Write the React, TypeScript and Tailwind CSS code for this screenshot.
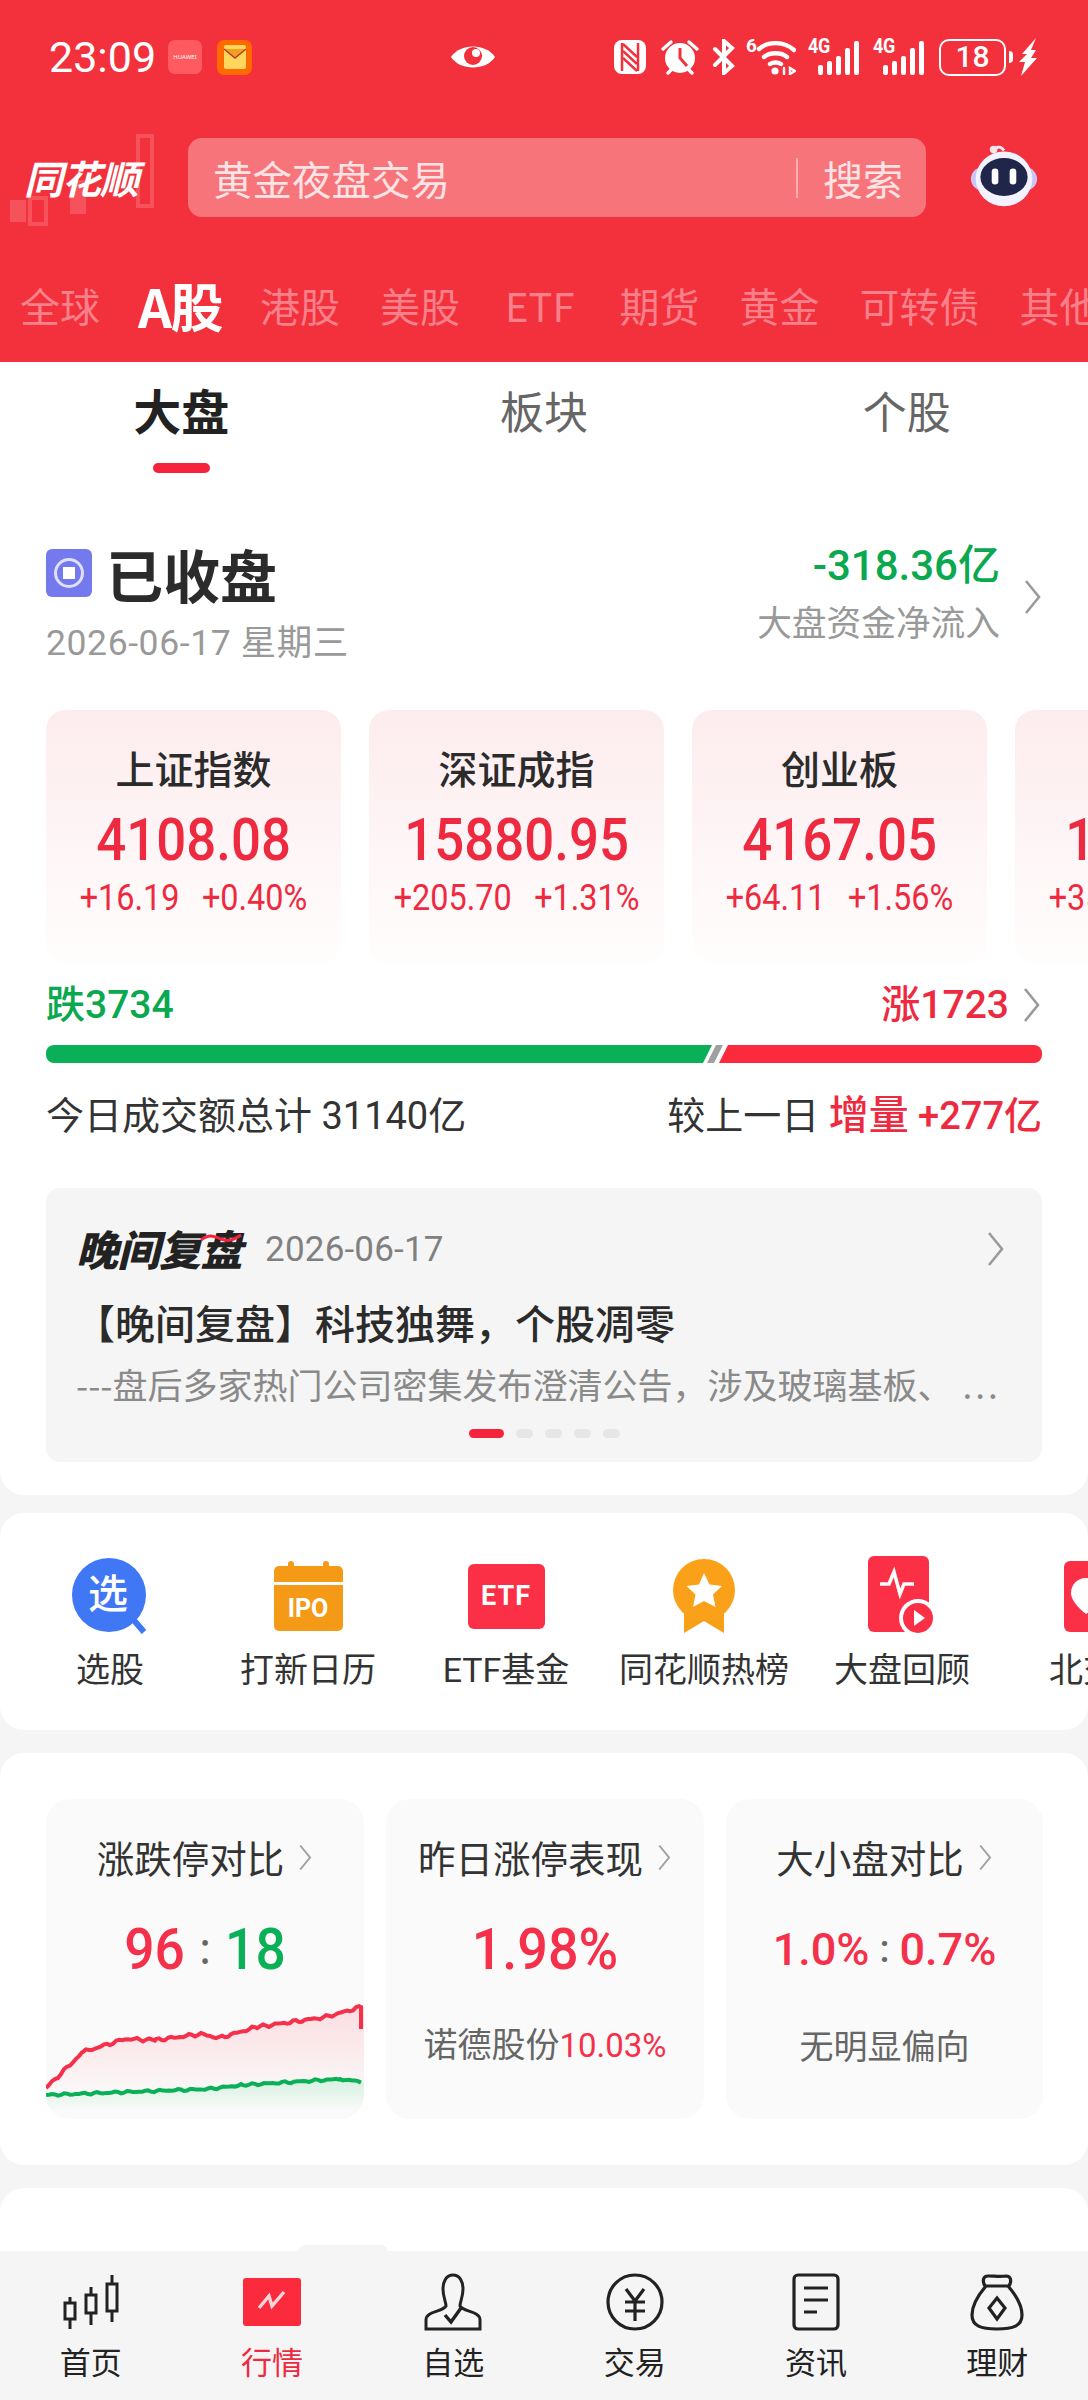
import React from 'react';

const CJK = '"Noto Sans CJK SC", sans-serif';
const NUM = 'Roboto, "Noto Sans CJK SC", sans-serif';

function Chevron({ className = 'w-[20px] h-[36px]', color = '#9a9a9a' }: { className?: string; color?: string }) {
  return (
    <svg viewBox="0 0 20 36" className={className} fill="none" stroke={color} strokeWidth="2.6">
      <path d="M3 2l13 16L3 34" />
    </svg>
  );
}

function StatusIcons() {
  return (
    <div className="flex items-center text-white">
      <svg viewBox="0 0 32 34" className="w-[32px] h-[34px] mr-[15px]" fill="white">
        <rect width="32" height="34" rx="8" />
        <path d="M8 3v28M24 3v28" stroke="#f2313c" strokeWidth="2.5" fill="none" />
        <path d="M9 4l14 13M9 11l14 13M9 18l14 13" stroke="#f2313c" strokeWidth="2.4" fill="none" />
      </svg>
      <svg viewBox="0 0 38 36" className="w-[38px] h-[36px] mr-[13px]" fill="white">
        <circle cx="19" cy="19" r="15" />
        <path d="M19 9v10l7 8" stroke="#f2313c" strokeWidth="3" fill="none" />
        <path d="M2 10l8-7M36 10l-8-7M7 34l4-4M31 34l-4-4" stroke="white" strokeWidth="3.4" fill="none" strokeLinecap="round" />
      </svg>
      <svg viewBox="0 0 24 36" className="w-[24px] h-[36px] mr-[10px]" fill="none" stroke="white" strokeWidth="4" strokeLinecap="round">
        <path d="M3 10l17 17-8 7V2l8 7L3 26" />
      </svg>
      <div className="relative w-[50px] h-[36px] mr-[12px]">
        <span className="absolute left-0 -top-[3px] text-[19px] font-bold leading-[20px]" style={{ fontFamily: NUM }}>6</span>
        <svg viewBox="0 0 50 36" className="w-[50px] h-[36px]" fill="none" stroke="white" strokeWidth="4.4" strokeLinecap="round">
          <path d="M13 10c9-8 25-8 35 1M18 18c6-5 17-5 23 0M24 25c3-2 8-2 11 0" />
          <circle cx="29" cy="32" r="3.6" fill="white" stroke="none" />
          <path d="M38 29v6M44 29l5 3-5 3z" strokeWidth="2.4" />
        </svg>
      </div>
      <Signal />
      <div className="w-[14px]" />
      <Signal />
      <div className="w-[15px]" />
      <div className="w-[67px] h-[37px] rounded-[10px] border-[2.5px] border-white flex items-center justify-center text-[30px] font-medium leading-none" style={{ fontFamily: NUM }}>
        18
      </div>
      <div className="w-[4px] h-[12px] bg-white rounded-r-full ml-[3px] mr-[6px]" />
      <svg viewBox="0 0 18 38" className="w-[18px] h-[38px]" fill="white">
        <path d="M17 0L3 16h5L0 24h6L2 38 18 20h-6l5-8h-5z" />
      </svg>
    </div>
  );
}

function Signal() {
  return (
    <div className="relative w-[51px] h-[36px]">
      <span className="absolute left-0 -top-[3px] text-[20px] font-bold leading-[20px] tracking-[-0.5px] scale-x-[0.9] origin-left" style={{ fontFamily: NUM }}>4G</span>
      <div className="absolute inset-0 flex items-end justify-end gap-[4px]">
        <div className="w-[5px] h-[10px] bg-white rounded-[2px]" />
        <div className="w-[5px] h-[14px] bg-white rounded-[2px]" />
        <div className="w-[5px] h-[19px] bg-white rounded-[2px]" />
        <div className="w-[5px] h-[27px] bg-white rounded-[2px]" />
        <div className="w-[5px] h-[34px] bg-white rounded-[2px]" />
      </div>
    </div>
  );
}

function StatusBar() {
  return (
    <div className="h-[114px] pl-[49px] pr-[51px] flex items-center">
      <span className="text-[43px] text-white leading-none w-[119px]" style={{ fontFamily: NUM }}>23:09</span>
      <div className="w-[34px] h-[34px] rounded-[7px] bg-[#ff5a60] flex items-center justify-center text-[6px] text-white">HUAWEI</div>
      <div className="w-[35px] h-[35px] rounded-[7px] bg-[#ff6a00] ml-[15px] flex items-center justify-center">
        <svg viewBox="0 0 24 26" className="w-[24px] h-[26px]">
          <rect x="1" y="1" width="22" height="24" rx="2" fill="#ffd65c" />
          <path d="M1 5l11 9 11-9" fill="#f0a020" stroke="#c0392b" strokeWidth="1.5" />
        </svg>
      </div>
      <div className="ml-[198px] mr-[118px]">
        <svg viewBox="0 0 46 34" className="w-[46px] h-[34px]">
          <path d="M1 17C10 3 36 3 45 17 36 31 10 31 1 17z" fill="white" />
          <circle cx="23" cy="16" r="9" fill="#f2313c" />
          <circle cx="26" cy="13" r="4" fill="white" />
        </svg>
      </div>
      <StatusIcons />
    </div>
  );
}

function Logo() {
  return (
    <div className="relative w-[188px] h-[100px] shrink-0">
      <svg viewBox="0 0 160 100" className="absolute left-[8px] -top-[8px] w-[160px] h-[100px]" fill="#f6525c">
        <rect x="2" y="70" width="16" height="22" />
        <rect x="22" y="68" width="16" height="26" fill="none" stroke="#f6525c" strokeWidth="4" />
        <rect x="62" y="50" width="16" height="34" />
        <rect x="130" y="6" width="14" height="70" fill="none" stroke="#f6525c" strokeWidth="4" />
      </svg>
      <span className="absolute left-[24px] top-[14px] text-[39px] leading-[50px] font-bold italic text-white tracking-[-1px]" style={{ fontFamily: CJK }}>同花顺</span>
    </div>
  );
}

function Robot() {
  return (
    <svg viewBox="0 0 72 72" className="w-[72px] h-[68px]">
      <path d="M24 10c2-6 8-8 12-2" stroke="#e7e8ff" strokeWidth="3" fill="none" />
      <circle cx="25" cy="7" r="4" fill="#f3e5e8" />
      <rect x="1" y="26" width="70" height="24" rx="12" fill="#c9c6f6" />
      <ellipse cx="36" cy="38" rx="30" ry="29" fill="#f3f2ff" />
      <ellipse cx="36" cy="36" rx="25" ry="20" fill="#20264a" />
      <rect x="23" y="27" width="7" height="17" rx="3.5" fill="white" />
      <rect x="42" y="27" width="7" height="17" rx="3.5" fill="white" />
    </svg>
  );
}

function Header() {
  const tabs = ['全球', 'A股', '港股', '美股', 'ETF', '期货', '黄金', '可转债', '其他'];
  return (
    <div className="bg-[#f2313c] h-[362px] shrink-0 overflow-hidden">
      <StatusBar />
      <div className="flex items-start h-[128px] pt-[24px]">
        <Logo />
        <div className="w-[738px] h-[79px] rounded-[14px] bg-[#f7747b] flex items-center pl-[25px] text-[#fde3e4]">
          <span className="text-[39.5px] leading-none flex-1" style={{ fontFamily: CJK }}>黄金夜盘交易</span>
          <div className="w-[2px] h-[40px] bg-[#fbaeb2]" />
          <span className="text-[40px] leading-none ml-[25px] mr-[23px]" style={{ fontFamily: CJK }}>搜索</span>
        </div>
        <div className="ml-[42px] mt-[5px]"><Robot /></div>
      </div>
      <div className="flex items-center gap-[40px] pl-[20px] h-[120px] pt-[6px] whitespace-nowrap" style={{ fontFamily: CJK }}>
        {tabs.map((t) =>
          t === 'A股' ? (
            <span key={t} className="text-[53px] font-bold text-white leading-none -ml-[2px] -mr-[2px] tracking-[-1.5px]">{t}</span>
          ) : t === 'ETF' ? (
            <span key={t} className="text-[40px] text-[#f8808a] leading-none px-[5px]">{t}</span>
          ) : (
            <span key={t} className="text-[40px] text-[#f8808a] leading-none">{t}</span>
          )
        )}
      </div>
    </div>
  );
}

function SubTabs() {
  return (
    <div className="grid grid-cols-3 h-[110px]" style={{ fontFamily: CJK }}>
      <div className="flex flex-col items-center pt-[21px]">
        <span className="text-[48px] leading-[52px] font-bold text-[#222]">大盘</span>
        <div className="w-[57px] h-[10px] mt-[28px] rounded-full bg-[#f5243c]" />
      </div>
      <div className="flex justify-center pt-[22px] text-[44px] leading-[52px] text-[#666]">板块</div>
      <div className="flex justify-center pt-[22px] text-[44px] leading-[52px] text-[#666]">个股</div>
    </div>
  );
}

function MarketState() {
  return (
    <div className="flex justify-between pl-[46px] pr-[46px] pt-[71px] h-[238px]">
      <div>
        <div className="flex items-center h-[60px]">
          <div className="w-[46px] h-[48px] rounded-[6px] bg-[#7479ee] flex items-center justify-center">
            <div className="w-[30px] h-[30px] rounded-full border-[3px] border-[#dfe0ff] flex items-center justify-center">
              <div className="w-[12px] h-[12px] bg-white" />
            </div>
          </div>
          <span className="ml-[14px] text-[57px] leading-none font-bold text-[#2b2b2b]" style={{ fontFamily: CJK }}>已收盘</span>
        </div>
        <div className="mt-[20px] text-[35.5px] leading-[40px] text-[#999] tracking-[0.6px]" style={{ fontFamily: NUM }}>2026-06-17 星期三</div>
      </div>
      <div className="flex items-center h-[100px] -mt-[6px]">
        <div className="flex flex-col items-end mt-[10px]">
          <span className="text-[42px] leading-[50px] font-medium text-[#0aa84f]" style={{ fontFamily: NUM }}>-318.36亿</span>
          <span className="text-[34.7px] leading-[44px] mt-[8px] text-[#999]" style={{ fontFamily: CJK }}>大盘资金净流入</span>
        </div>
        <Chevron className="w-[20px] h-[36px] ml-[23px] -mr-[1px] mt-[20px]" />
      </div>
    </div>
  );
}

const indexes = [
  { name: '上证指数', value: '4108.08', a: '+16.19', b: '+0.40%' },
  { name: '深证成指', value: '15880.95', a: '+205.70', b: '+1.31%' },
  { name: '创业板', value: '4167.05', a: '+64.11', b: '+1.56%' },
  { name: '科创50', value: '1620.33', a: '+35.20', b: '+2.20%' },
];

function IndexCards() {
  return (
    <div className="flex gap-[28px] pl-[46px] overflow-hidden">
      {indexes.map((c) => (
        <div key={c.name} className="w-[295px] h-[254px] shrink-0 rounded-[20px] bg-gradient-to-b from-[#fdecee] to-[#fffdfd] flex flex-col items-center pt-[33px]">
          <span className="text-[39px] leading-[48px] font-medium text-[#2b2b2b]" style={{ fontFamily: CJK }}>{c.name}</span>
          <span className="text-[60px] leading-[60px] mt-[19px] font-medium text-[#ee2a40] scale-x-[0.88]" style={{ fontFamily: NUM }}>{c.value}</span>
          <div className="flex gap-[25px] mt-[8px] text-[36px] leading-[40px] text-[#ee2a40] scale-x-[0.9] whitespace-nowrap" style={{ fontFamily: NUM }}>
            <span>{c.a}</span>
            <span>{c.b}</span>
          </div>
        </div>
      ))}
    </div>
  );
}

function Breadth() {
  return (
    <div className="px-[46px] pt-[16px]">
      <div className="flex justify-between items-center h-[50px]">
        <span className="text-[39px] leading-none font-medium text-[#0aa84f]" style={{ fontFamily: NUM }}>跌3734</span>
        <div className="flex items-center">
          <span className="text-[39px] leading-none font-medium text-[#ee2a40]" style={{ fontFamily: NUM }}>涨1723</span>
          <Chevron className="w-[20px] h-[36px] ml-[13px]" />
        </div>
      </div>
      <svg viewBox="0 0 996 18" className="w-[996px] h-[18px] mt-[15px] block">
        <path d="M8 0h658l-9 18H8a8 8 0 0 1-8-8V8a8 8 0 0 1 8-8z" fill="#0ab057" />
        <path d="M670 0h7l-9 18h-7z" fill="#a0a0a0" />
        <path d="M682 0h306a8 8 0 0 1 8 8v2a8 8 0 0 1-8 8H673z" fill="#fb2a3c" />
      </svg>
      <div className="flex justify-between items-center h-[50px] mt-[28px] text-[38px] leading-none text-[#333]" style={{ fontFamily: NUM }}>
        <span>今日成交额总计 31140亿</span>
        <span>较上一日 <span className="text-[#ee2a40] font-medium"><span className="text-[40px]">增量</span> +277亿</span></span>
      </div>
    </div>
  );
}

function ReviewCard() {
  return (
    <div className="mx-[46px] mt-[47px] h-[274px] rounded-[14px] bg-[#f5f5f5] pl-[30px] pr-[36px] pt-[36px]">
      <div className="flex items-center justify-between h-[50px]">
        <div className="flex items-center">
          <div className="relative">
            <span className="text-[42px] leading-none font-black italic text-[#222] tracking-[-0.5px]" style={{ fontFamily: CJK }}>晚间复盘</span>
            <svg viewBox="0 0 42 10" className="absolute right-0 top-[6px] w-[42px] h-[10px]" fill="none" stroke="#f5243c" strokeWidth="3">
              <path d="M1 7c8-6 12-4 20-1s12 1 20-4" />
            </svg>
          </div>
          <span className="ml-[23px] text-[35px] leading-none text-[#808080] tracking-[0.2px]" style={{ fontFamily: NUM }}>2026-06-17</span>
        </div>
        <Chevron className="w-[20px] h-[36px]" />
      </div>
      <div className="mt-[23px] -ml-[1px] text-[40px] leading-[50px] font-medium text-[#2b2b2b] whitespace-nowrap" style={{ fontFamily: CJK }}>【晚间复盘】科技独舞，个股凋零</div>
      <div className="mt-[16px] text-[35px] leading-[42px] text-[#8a8a8a] whitespace-nowrap" style={{ fontFamily: CJK }}>
        ---盘后多家热门公司密集发布澄清公告，涉及玻璃基板、<span className="tracking-[3px] ml-[10px]">...</span>
      </div>
      <div className="flex justify-center items-center gap-[12px] mt-[24px] -ml-[30px] -mr-[36px]">
        <div className="w-[35px] h-[9px] rounded-full bg-[#f5243c]" />
        <div className="w-[17px] h-[9px] rounded-full bg-[#e6e6e6]" />
        <div className="w-[17px] h-[9px] rounded-full bg-[#e6e6e6]" />
        <div className="w-[17px] h-[9px] rounded-full bg-[#e6e6e6]" />
        <div className="w-[17px] h-[9px] rounded-full bg-[#e6e6e6]" />
      </div>
    </div>
  );
}

function PickIcon() {
  return (
    <div className="relative w-[76px] h-[76px]">
      <svg viewBox="0 0 76 76" className="absolute inset-0 w-[76px] h-[76px]">
        <path d="M60 60l12 14" stroke="#3f77f5" strokeWidth="6" />
        <circle cx="37" cy="37" r="37" fill="#3f77f5" />
      </svg>
      <span className="absolute left-[16px] top-[8px] text-[40px] leading-[50px] font-medium text-white" style={{ fontFamily: CJK }}>选</span>
    </div>
  );
}

function IpoIcon() {
  return (
    <div className="w-[69px] h-[70px] flex flex-col items-center relative">
      <div className="absolute left-[14px] top-0 w-[6px] h-[8px] rounded-t-[3px] bg-[#f59a17]" />
      <div className="absolute right-[14px] top-0 w-[6px] h-[8px] rounded-t-[3px] bg-[#f59a17]" />
      <div className="w-full h-[16px] mt-[5px] rounded-t-[5px] bg-[#f59a17]" />
      <div className="w-full flex-1 mt-[3px] rounded-b-[5px] bg-[#f59a17] flex items-center justify-center text-white text-[25px] font-bold leading-none" style={{ fontFamily: NUM }}>IPO</div>
    </div>
  );
}

function EtfIcon() {
  return (
    <div className="w-[77px] h-[65px] rounded-[6px] bg-[#fb2f45] flex items-center justify-center text-white text-[27px] font-bold leading-none tracking-[1px]" style={{ fontFamily: NUM }}>ETF</div>
  );
}

function MedalIcon() {
  return (
    <svg viewBox="0 0 64 74" className="w-[64px] h-[74px]">
      <path d="M12 40h40v34L32 62 12 74z" fill="#f5a017" />
      <circle cx="32" cy="31" r="31" fill="#fba019" />
      <path d="M32 14l5.5 11.5 12.5 1.5-9 8.5 2.5 12.5L32 42l-11 6 2.5-12.5-9-8.5 12.5-1.5z" fill="white" />
    </svg>
  );
}

function ReplayIcon() {
  return (
    <svg viewBox="0 0 68 80" className="w-[68px] h-[80px]">
      <rect x="0" y="0" width="61" height="76" rx="6" fill="#fb2f45" />
      <path d="M12 28h9l5-12 6 22 4-10h10" stroke="white" strokeWidth="3.5" fill="none" />
      <circle cx="50" cy="62" r="19" fill="white" />
      <circle cx="50" cy="62" r="15" fill="#fb2f45" />
      <path d="M46 54l11 8-11 8z" fill="white" />
    </svg>
  );
}

function NorthIcon() {
  return (
    <div className="w-[72px] h-[71px] rounded-[6px] bg-[#fb2f45] flex items-center pl-[6px]">
      <svg viewBox="0 0 32 40" className="w-[32px] h-[40px]">
        <path d="M16 2c9 0 15 7 15 15 0 10-15 21-15 21S1 27 1 17C1 9 7 2 16 2z" fill="white" />
      </svg>
    </div>
  );
}

function Shortcuts() {
  const items: [string, React.ReactNode][] = [
    ['选股', <PickIcon />],
    ['打新日历', <IpoIcon />],
    ['ETF基金', <EtfIcon />],
    ['同花顺热榜', <MedalIcon />],
    ['大盘回顾', <ReplayIcon />],
    ['北交所', <NorthIcon />],
  ];
  return (
    <div className="h-[217px] mt-[18px] shrink-0 bg-white rounded-[24px] flex pl-[11px] overflow-hidden">
      {items.map(([label, icon]) => (
        <div key={label} className="w-[198px] shrink-0 flex flex-col items-center">
          <div className="h-[80px] mt-[43px] flex items-center justify-center">{icon}</div>
          <span className="mt-[12px] text-[34px] leading-[44px] text-[#333] whitespace-nowrap" style={{ fontFamily: NUM }}>{label}</span>
        </div>
      ))}
    </div>
  );
}

// jagged line through the anchor points, deterministic so the picture stays put
function jagged(points: number[][], amp: number) {
  const out: string[] = [];
  for (let i = 0; i < points.length - 1; i++) {
    const [x0, y0] = points[i];
    const [x1, y1] = points[i + 1];
    for (let x = x0; x < x1; x += 3) {
      const t = (x - x0) / (x1 - x0);
      const n = Math.sin(x * 1.7) * amp + Math.sin(x * 0.6) * amp * 0.8;
      out.push(`${x},${(y0 + (y1 - y0) * t + n).toFixed(1)}`);
    }
  }
  return out;
}

function Sparkline() {
  const red = jagged([[0, 88], [37, 52], [79, 39], [110, 40], [155, 34], [173, 38], [211, 27], [280, 17], [315, 7]], 1);
  const green = jagged([[0, 95], [162, 89], [197, 85], [294, 79], [318, 82]], 0.7);
  return (
    <svg viewBox="0 0 318 119" className="w-[318px] h-[119px] block mt-[21px]">
      <defs>
        <linearGradient id="redFill" x1="0" y1="0" x2="0" y2="1">
          <stop offset="0" stopColor="#fbdde0" />
          <stop offset="1" stopColor="#fafafa" />
        </linearGradient>
        <linearGradient id="greenFill" x1="0" y1="0" x2="0" y2="1">
          <stop offset="0" stopColor="#d5f0df" />
          <stop offset="1" stopColor="#fafafa" />
        </linearGradient>
      </defs>
      <path d={`M0,100 L${red.join(' L')} L318,7 L318,100 Z`} fill="url(#redFill)" />
      <path d={`M0,110 L${green.join(' L')} L318,82 L318,110 Z`} fill="url(#greenFill)" />
      <polyline points={red.join(' ') + ' 315,7 315,29'} fill="none" stroke="#f5304a" strokeWidth="4" />
      <polyline points={green.join(' ')} fill="none" stroke="#0ab057" strokeWidth="4" />
    </svg>
  );
}

function TitleRow({ title }: { title: string }) {
  return (
    <div className="flex items-center justify-center h-[48px]">
      <span className="text-[37.5px] leading-none text-[#333]" style={{ fontFamily: CJK }}>{title}</span>
      <Chevron className="w-[15px] h-[27px] ml-[14px]" color="#a0a0a0" />
    </div>
  );
}

function Compare() {
  return (
    <div className="h-[412px] mt-[23px] shrink-0 bg-white rounded-[24px] grid grid-cols-[318px_318px_317px] gap-x-[22px] px-[46px] pt-[46px]">
      <div className="h-[320px] rounded-[24px] bg-[#fafafa] overflow-hidden pt-[34px]">
        <TitleRow title="涨跌停对比" />
        <div className="flex justify-center items-center h-[60px] mt-[38px] text-[58px] leading-none font-medium scale-x-[0.92]" style={{ fontFamily: NUM }}>
          <span className="text-[#f5304a]">96</span>
          <span className="text-[#666] mx-[16px] text-[44px]">:</span>
          <span className="text-[#0ab057]">18</span>
        </div>
        <Sparkline />
      </div>
      <div className="h-[320px] rounded-[24px] bg-[#fafafa] pt-[34px]">
        <TitleRow title="昨日涨停表现" />
        <div className="flex justify-center items-center h-[60px] mt-[38px] text-[58px] leading-none font-medium text-[#f5304a] scale-x-[0.93]" style={{ fontFamily: NUM }}>1.98%</div>
        <div className="flex justify-center items-center h-[46px] mt-[43px] text-[34px] leading-none text-[#666]" style={{ fontFamily: NUM }}>
          诺德股份<span className="text-[#f5304a] text-[33px]">10.03%</span>
        </div>
      </div>
      <div className="h-[320px] rounded-[24px] bg-[#fafafa] pt-[34px]">
        <TitleRow title="大小盘对比" />
        <div className="flex justify-center items-center h-[60px] mt-[38px] text-[45px] leading-none font-medium text-[#f5304a]" style={{ fontFamily: NUM }}>
          1.0%<span className="text-[#666] mx-[10px] text-[38px]">:</span>0.7%
        </div>
        <div className="flex justify-center items-center h-[46px] mt-[43px] text-[34px] leading-none text-[#666]" style={{ fontFamily: CJK }}>无明显偏向</div>
      </div>
    </div>
  );
}

function NavIcon({ name }: { name: string }) {
  if (name === '首页') {
    return (
      <svg viewBox="0 0 56 54" className="w-[56px] h-[54px]" fill="none" stroke="#222" strokeWidth="3">
        <rect x="2" y="28" width="10" height="16" />
        <path d="M7 22v6M7 44v10" />
        <rect x="23" y="20" width="10" height="18" />
        <path d="M28 12v8M28 38v12" />
        <rect x="44" y="9" width="10" height="27" />
        <path d="M49 0v9M49 36v11" />
      </svg>
    );
  }
  if (name === '行情') {
    return (
      <svg viewBox="0 0 58 48" className="w-[58px] h-[48px]">
        <rect width="58" height="48" rx="3" fill="#fb2a3c" />
        <path d="M16 30l10-12 3 10 12-14" stroke="#ffd7da" strokeWidth="3.4" fill="none" />
      </svg>
    );
  }
  if (name === '自选') {
    return (
      <svg viewBox="0 0 58 58" className="w-[58px] h-[58px]" fill="none" stroke="#222" strokeWidth="3">
        <path d="M29 2c7 0 10 7 10 14 0 8-3 13-3 17 3 6 20 5 20 14v9H2v-9c0-9 17-8 20-14 0-4-3-9-3-17 0-7 3-14 10-14z" />
        <path d="M21 42l6 7 10-14" strokeWidth="3.4" />
      </svg>
    );
  }
  if (name === '交易') {
    return (
      <svg viewBox="0 0 58 58" className="w-[58px] h-[58px]" fill="none" stroke="#222" strokeWidth="3.2">
        <circle cx="29" cy="29" r="27" />
        <path d="M20 16l9 12 9-12M19 29h20M19 38h20M29 28v20" />
      </svg>
    );
  }
  if (name === '资讯') {
    return (
      <svg viewBox="0 0 48 58" className="w-[48px] h-[58px]" fill="none" stroke="#222" strokeWidth="3.2">
        <rect x="2" y="2" width="44" height="54" rx="4" />
        <path d="M12 15h24M12 27h24M12 39h13" />
      </svg>
    );
  }
  return (
    <svg viewBox="0 0 54 58" className="w-[54px] h-[58px]" fill="none" stroke="#222" strokeWidth="3.2">
      <path d="M15 13c-3-5-2-10 3-10 6 0 12 1 18 0 5 0 6 5 3 10" />
      <path d="M16 13h22c6 7 14 17 14 29 0 11-9 14-25 14S2 53 2 42c0-12 8-22 14-29z" />
      <path d="M27 25l8 10-8 11-8-11z" />
    </svg>
  );
}

function BottomNav() {
  const items = ['首页', '行情', '自选', '交易', '资讯', '理财'];
  return (
    <div className="relative h-[149px] shrink-0 bg-[#f5f5f5] grid grid-cols-6">
      <div className="absolute left-[298px] -top-[6px] w-[90px] h-[7px] rounded-t-[10px] bg-[#f5f5f5]" />
      {items.map((n) => (
        <div key={n} className="flex flex-col items-center pt-[21px]">
          <div className="h-[60px] flex items-center justify-center"><NavIcon name={n} /></div>
          <span className={`mt-[9px] text-[31px] leading-[40px] ${n === '行情' ? 'text-[#ee2a40]' : 'text-[#222]'}`} style={{ fontFamily: CJK }}>{n}</span>
        </div>
      ))}
    </div>
  );
}

export default function App() {
  return (
    <div className="w-[1088px] h-[2400px] bg-[#f5f5f5] flex flex-col overflow-hidden">
      <Header />
      <div className="h-[1133px] shrink-0 bg-white rounded-b-[24px]">
        <SubTabs />
        <MarketState />
        <IndexCards />
        <Breadth />
        <ReviewCard />
      </div>
      <Shortcuts />
      <Compare />
      <div className="flex-1 mt-[23px] bg-white rounded-t-[24px]" />
      <BottomNav />
    </div>
  );
}
